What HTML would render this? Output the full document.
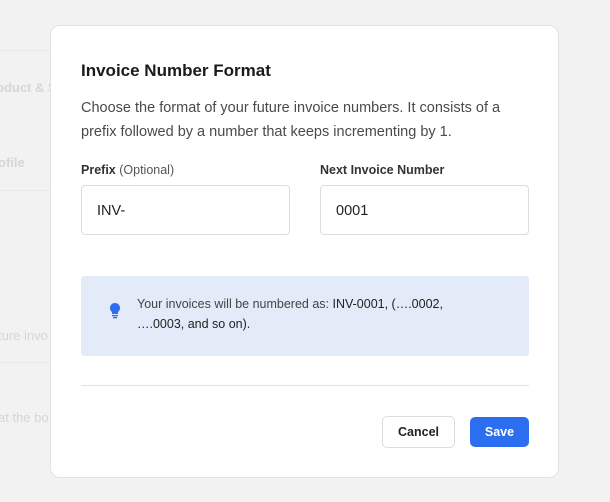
<!DOCTYPE html>
<html><head><style>
body{margin:0;width:610px;height:502px;background:#f2f2f2;font-family:"Liberation Sans",Roboto,sans-serif;position:relative;overflow:hidden}
.bg{position:absolute;color:#d6d6d6;font-size:13px}
.m{position:absolute;left:50px;top:25px;width:507px;height:451px;background:#fff;border:1px solid #e2e2e2;border-radius:10px}
.a{position:absolute}
h1{position:absolute;left:30px;top:35px;margin:0;font-size:17px;font-weight:bold;color:#1a1a1a}
.d{position:absolute;left:30px;top:70px;font-size:14.5px;line-height:24px;color:#4a4a4a;width:445px}
.lab{position:absolute;top:137px;font-size:12.5px;color:#333}
.in{position:absolute;top:159px;width:209px;height:50px;border:1px solid #ddd;border-radius:4px;font-size:14.5px;color:#222;line-height:50px;text-indent:15px;box-sizing:border-box}
.info{position:absolute;left:30px;top:250px;width:448px;height:80px;background:#e3eaf8;border-radius:3px}
</style></head><body>
<div class="bg" style="left:-4px;top:80px;font-weight:bold">oduct &amp; Se</div>
<div class="bg" style="left:-2px;top:155px;font-weight:bold">ofile</div>
<div class="bg" style="left:-2px;top:328px">ture invo</div>
<div class="bg" style="left:-2px;top:410px">at the bo</div>
<div style="position:absolute;left:0;top:50px;width:60px;border-top:1px solid #e8e8e8"></div>
<div style="position:absolute;left:0;top:190px;width:60px;border-top:1px solid #e8e8e8"></div>
<div style="position:absolute;left:0;top:362px;width:60px;border-top:1px solid #e8e8e8"></div>
<div class="m">
<h1>Invoice Number Format</h1>
<div class="d">Choose the format of your future invoice numbers. It consists of a prefix followed by a number that keeps incrementing by 1.</div>
<div class="lab" style="left:30px"><b>Prefix</b> <span style="color:#555">(Optional)</span></div>
<div class="lab" style="left:269px"><b>Next Invoice Number</b></div>
<div class="in" style="left:30px">INV-</div>
<div class="in" style="left:269px">0001</div>
<div class="info">
<svg class="a" style="left:28px;top:26px" width="12" height="18" viewBox="0 0 12 18"><path d="M6 1a5 5 0 0 0-3 9v2h6v-2a5 5 0 0 0-3-9z" fill="#2b6ff0"/><rect x="3" y="13" width="6" height="1.3" fill="#2b6ff0"/><rect x="4" y="15" width="4" height="1.3" fill="#2b6ff0"/></svg>
<div class="a" style="left:56px;top:18px;font-size:12.5px;line-height:20px;color:#444;width:330px">Your invoices will be numbered as: <span style="color:#222">INV-0001, (….0002, ….0003, and so on).</span></div>
</div>
<div class="a" style="left:30px;top:359px;width:448px;border-top:1px solid #e2e2e2"></div>
<div class="a" style="left:331px;top:390px;width:71px;height:30px;border:1px solid #ddd;border-radius:5px;font-size:12.5px;font-weight:bold;color:#222;text-align:center;line-height:30px">Cancel</div>
<div class="a" style="left:419px;top:391px;width:59px;height:30px;background:#2b6ff0;border-radius:5px;font-size:12.5px;font-weight:bold;color:#fff;text-align:center;line-height:30px">Save</div>
</div>
</body></html>
